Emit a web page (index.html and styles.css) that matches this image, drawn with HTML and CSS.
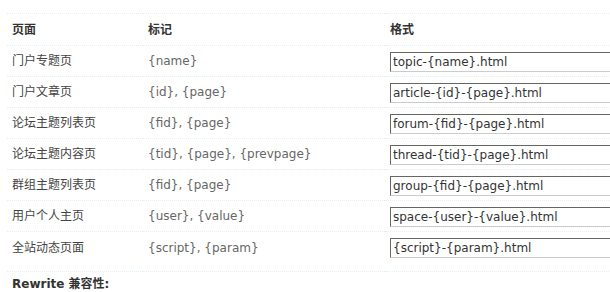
FILE: index.html
```html
<!DOCTYPE html>
<html lang="zh-CN">
<head>
<meta charset="utf-8">
<title>Rewrite</title>
<link rel="stylesheet" href="styles.css">
</head>
<body>
<table class="tb">
  <colgroup>
    <col class="c1"><col class="c2"><col class="c3">
  </colgroup>
  <thead>
    <tr class="hd">
      <th>页面</th>
      <th>标记</th>
      <th>格式</th>
    </tr>
  </thead>
  <tbody>
    <tr>
      <td>门户专题页</td>
      <td class="mark">{name}</td>
      <td class="fmt"><input class="txt" type="text" value="topic-{name}.html"></td>
    </tr>
    <tr>
      <td>门户文章页</td>
      <td class="mark">{id}, {page}</td>
      <td class="fmt"><input class="txt" type="text" value="article-{id}-{page}.html"></td>
    </tr>
    <tr>
      <td>论坛主题列表页</td>
      <td class="mark">{fid}, {page}</td>
      <td class="fmt"><input class="txt" type="text" value="forum-{fid}-{page}.html"></td>
    </tr>
    <tr>
      <td>论坛主题内容页</td>
      <td class="mark">{tid}, {page}, {prevpage}</td>
      <td class="fmt"><input class="txt" type="text" value="thread-{tid}-{page}.html"></td>
    </tr>
    <tr>
      <td>群组主题列表页</td>
      <td class="mark">{fid}, {page}</td>
      <td class="fmt"><input class="txt" type="text" value="group-{fid}-{page}.html"></td>
    </tr>
    <tr>
      <td>用户个人主页</td>
      <td class="mark">{user}, {value}</td>
      <td class="fmt"><input class="txt" type="text" value="space-{user}-{value}.html"></td>
    </tr>
    <tr class="last">
      <td>全站动态页面</td>
      <td class="mark">{script}, {param}</td>
      <td class="fmt"><input class="txt" type="text" value="{script}-{param}.html"></td>
    </tr>
    <tr class="part">
      <td colspan="3">Rewrite 兼容性:</td>
    </tr>
  </tbody>
</table>
</body>
</html>
```
FILE: styles.css
```css
html, body {
  margin: 0;
  padding: 0;
  overflow: hidden;
  background: #fff;
}
body {
  font: 12px/18px "DejaVu Sans", Verdana, "Noto Sans CJK SC", sans-serif;
  color: #444;
}
.tb {
  border-collapse: collapse;
  table-layout: fixed;
  width: 620px;
  margin: 13px 0 0 7px;
}
.c1 { width: 136px; }
.c2 { width: 242px; }
.c3 { width: 242px; }
.tb th, .tb td {
  border-top: 1px dotted #DEEFFB;
  text-align: left;
  vertical-align: middle;
  padding: 0 5px;
  white-space: nowrap;
  overflow: visible;
}
.tb th {
  font-weight: bold;
  color: #333;
  padding-top: 7px;
  padding-bottom: 6px;
}
.tb td.mark { color: #666; }
.tb td.fmt {
  padding-top: 6px;
  padding-bottom: 4px;
}
.tb tr.last td { vertical-align: top; padding-top: 7px; }
.tb tr.last td.fmt { padding-top: 6px; padding-bottom: 13px; }
.txt {
  display: block;
  box-sizing: border-box;
  width: 250px;
  height: 20px;
  margin: 0;
  padding: 0 2px;
  border: 1px solid;
  border-color: #666 #ccc #ccc #666;
  font: 12px/18px "DejaVu Sans", Verdana, "Noto Sans CJK SC", sans-serif;
  color: #333;
  background: #fff;
  outline: none;
}
.tb tr.part td {
  font-weight: bold;
  color: #333;
  padding-top: 3px;
  padding-bottom: 4px;
}
```
